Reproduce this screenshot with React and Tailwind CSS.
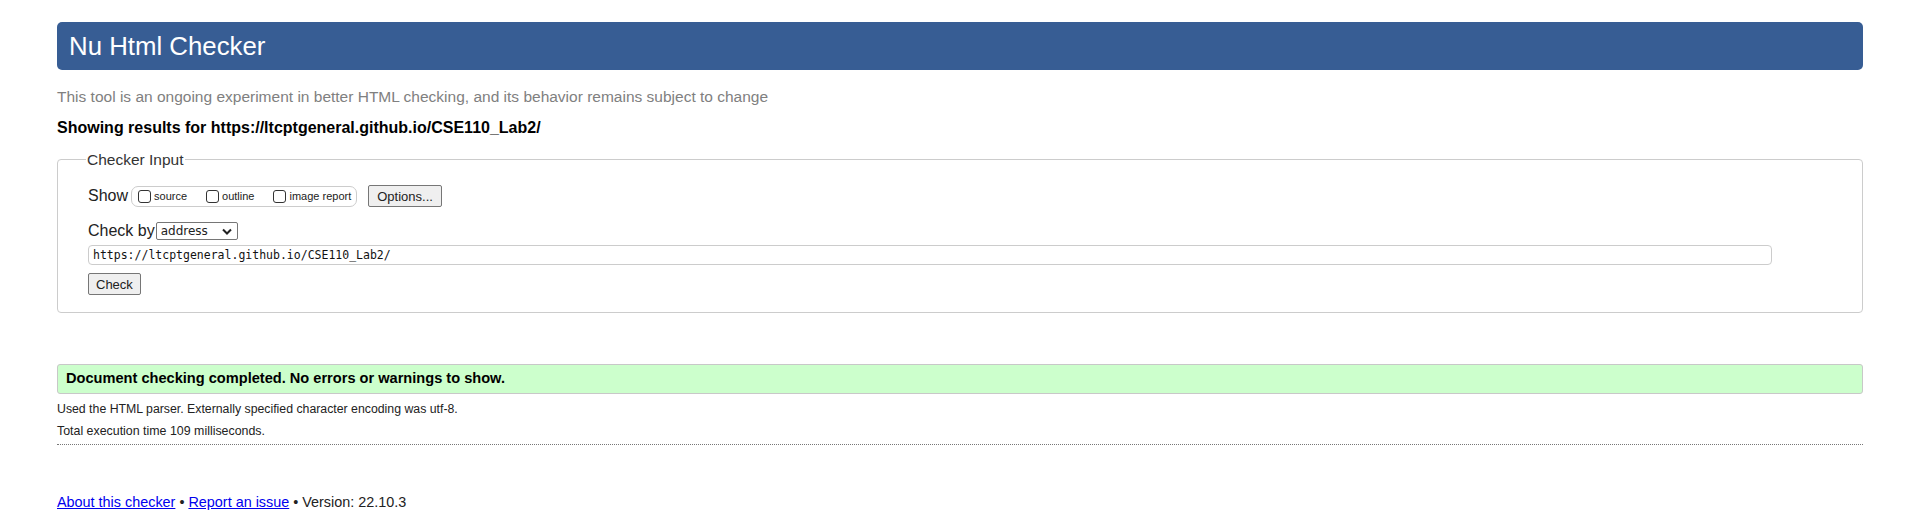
export default function App() {
  return (
    <div className="min-h-[521px] bg-white px-[57px] pt-[22px] text-black" style={{ fontFamily: '"Liberation Sans", Arial, sans-serif' }}>
      <h1 className="flex h-[48px] items-center rounded-[5px] bg-[#375d94] pl-[12px] text-[25.8px] font-normal text-white">
        Nu Html Checker
      </h1>

      <p className="mt-[18px] text-[15.5px] leading-[18px] text-[#808080]">
        This tool is an ongoing experiment in better HTML checking, and its behavior remains subject to change
      </p>
      <p className="mt-[13px] text-[16px] font-bold leading-[18px]">
        Showing results for https://ltcptgeneral.github.io/CSE110_Lab2/
      </p>

      <fieldset className="mt-[11px] rounded-[4px] border border-[#cccccc] pb-[16px] pl-[30px] pr-[90px]">
        <legend className="ml-[-2px] px-[1px] text-[15.5px] text-[#333]">Checker Input</legend>

        <div className="mt-[13px] flex items-center">
          <span className="text-[16px] text-[#222]">Show</span>
          <div className="ml-[3px] flex h-[21px] items-center gap-[19px] rounded-[7px] border border-[#cccccc] pl-[6px] pr-[5px] text-[11px] text-[#222]">
            <label className="flex items-center">
              <input type="checkbox" className="mr-[3px] h-[13px] w-[13px] appearance-none rounded-[3px] border border-[#333]" />
              source
            </label>
            <label className="flex items-center">
              <input type="checkbox" className="mr-[3px] h-[13px] w-[13px] appearance-none rounded-[3px] border border-[#333]" />
              outline
            </label>
            <label className="flex items-center">
              <input type="checkbox" className="mr-[3px] h-[13px] w-[13px] appearance-none rounded-[3px] border border-[#333]" />
              image report
            </label>
          </div>
          <button className="ml-[11px] h-[22px] rounded-[2px] border border-[#767676] bg-[#efefef] px-[8px] text-[13px] text-[#222]">
            Options...
          </button>
        </div>

        <div className="mt-[11px] flex items-center">
          <span className="text-[16px] text-[#222]">Check by</span>
          <div className="ml-[1px] flex h-[18px] w-[82px] items-center justify-between rounded-[2px] border border-[#767676] pl-[4px] pr-[5px] text-[#222]" style={{ fontFamily: '"DejaVu Sans", sans-serif' }}>
            <span className="text-[12px]">address</span>
            <svg width="10" height="7" viewBox="0 0 10 7">
              <path d="M1 1.5 L5 5.5 L9 1.5" fill="none" stroke="#222" strokeWidth="2" />
            </svg>
          </div>
        </div>

        <div className="mt-[2px] flex h-[20px] items-center rounded-[4px] border border-[#cccccc] pl-[4px] text-[11.5px] text-[#111]" style={{ fontFamily: '"DejaVu Sans Mono", monospace' }}>
          https://ltcptgeneral.github.io/CSE110_Lab2/
        </div>

        <button className="mt-[8px] h-[22px] rounded-[2px] border border-[#767676] bg-[#efefef] px-[7px] text-[13px] text-[#222]">
          Check
        </button>
      </fieldset>

      <div className="mt-[51px] flex h-[30px] items-center rounded-[3px] border border-[#c8c8c8] bg-[#ccffcc] pl-[8px] text-[14.6px] font-bold">
        Document checking completed. No errors or warnings to show.
      </div>

      <p className="mt-[5px] text-[12.3px] leading-[20px] text-[#222]">
        Used the HTML parser. Externally specified character encoding was utf-8.
      </p>
      <p className="mt-[2px] text-[12.4px] leading-[20px] text-[#222]">Total execution time 109 milliseconds.</p>
      <div className="mt-[3px] border-b border-dotted border-[#777]" />

      <p className="mt-[47px] text-[14.4px] text-[#222]">
        <a href="#" className="text-[#0000ee] underline">About this checker</a>
        {' • '}
        <a href="#" className="text-[#0000ee] underline">Report an issue</a>
        {' • Version: 22.10.3'}
      </p>
    </div>
  );
}
